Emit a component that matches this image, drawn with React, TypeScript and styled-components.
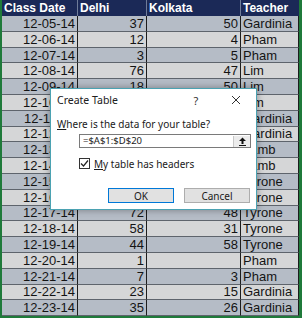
import styled, { createGlobalStyle } from "styled-components";

const GlobalStyle = createGlobalStyle`
	html, body {
		margin: 0;
		padding: 0;
		background: #ffffff;
	}
`;

type Row = { date: string; delhi: string; kolkata: string; teacher: string };

const rows: Row[] = [
	{ date: "12-05-14", delhi: "37", kolkata: "50", teacher: "Gardinia" },
	{ date: "12-06-14", delhi: "12", kolkata: "4", teacher: "Pham" },
	{ date: "12-07-14", delhi: "3", kolkata: "5", teacher: "Pham" },
	{ date: "12-08-14", delhi: "76", kolkata: "47", teacher: "Lim" },
	{ date: "12-09-14", delhi: "18", kolkata: "50", teacher: "Lim" },
	{ date: "12-10-14", delhi: "64", kolkata: "22", teacher: "Lim" },
	{ date: "12-11-14", delhi: "9", kolkata: "41", teacher: "Gardinia" },
	{ date: "12-12-14", delhi: "27", kolkata: "16", teacher: "Gardinia" },
	{ date: "12-13-14", delhi: "53", kolkata: "8", teacher: "Lamb" },
	{ date: "12-14-14", delhi: "40", kolkata: "29", teacher: "Lamb" },
	{ date: "12-15-14", delhi: "11", kolkata: "62", teacher: "Tyrone" },
	{ date: "12-16-14", delhi: "35", kolkata: "19", teacher: "Tyrone" },
	{ date: "12-17-14", delhi: "72", kolkata: "48", teacher: "Tyrone" },
	{ date: "12-18-14", delhi: "58", kolkata: "31", teacher: "Tyrone" },
	{ date: "12-19-14", delhi: "44", kolkata: "58", teacher: "Tyrone" },
	{ date: "12-20-14", delhi: "1", kolkata: "", teacher: "Pham" },
	{ date: "12-21-14", delhi: "7", kolkata: "3", teacher: "Pham" },
	{ date: "12-22-14", delhi: "23", kolkata: "15", teacher: "Gardinia" },
	{ date: "12-23-14", delhi: "35", kolkata: "26", teacher: "Gardinia" },
];

const headers = ["Class Date", "Delhi", "Kolkata", "Teacher"];

const Sheet = styled.div`
	position: relative;
	width: 302px;
	height: 318px;
	box-sizing: border-box;
	overflow: hidden;
	border-left: 2px solid #1f7a3a;
	border-right: 3px solid #1f7a3a;
	border-bottom: 2px solid #1f7a3a;
	background: #c9cdd2;
	font-family: "Liberation Sans", Arial, sans-serif;
`;

const Grid = styled.div`
	display: grid;
	grid-template-columns: 76px 69px 94px 58px;
	grid-template-rows: 16px repeat(19, 15.8px);
`;

const HeaderCell = styled.div`
	display: flex;
	align-items: center;
	padding-left: 2px;
	box-sizing: border-box;
	background: #1b2957;
	color: #ffffff;
	font-weight: 700;
	font-size: 12px;
	border-right: 1px solid #6f7c99;
	white-space: nowrap;
	overflow: hidden;

	&:nth-child(4) {
		border-right: none;
	}
`;

const Cell = styled.div<{ $align: "left" | "right"; $dark: boolean }>`
	display: flex;
	align-items: center;
	justify-content: ${(p) => (p.$align === "right" ? "flex-end" : "flex-start")};
	padding: 0 2px;
	box-sizing: border-box;
	background: ${(p) => (p.$dark ? "#b5bcc6" : "#d5d6d7")};
	color: #141414;
	font-size: 13px;
	border-right: 1px solid #1d1d1d;
	border-bottom: 1px solid #5e646c;
	white-space: nowrap;
	overflow: hidden;
`;

const Dialog = styled.div`
	position: absolute;
	left: 48px;
	top: 88px;
	width: 207px;
	height: 122px;
	box-sizing: border-box;
	display: flex;
	flex-direction: column;
	padding: 0 6px;
	background: #ffffff;
	border: 1px solid #4ba2b2;
	box-shadow: 0 0 7px rgba(0, 0, 0, 0.35);
	font-family: "Noto Sans", "Open Sans", sans-serif;
	font-size: 10px;
	color: #1a1a1a;
`;

const TitleBar = styled.div`
	display: flex;
	align-items: center;
	height: 22px;
`;

const Title = styled.span`
	flex: 1;
	font-size: 10.5px;
	color: #202020;
`;

const TitleButton = styled.span`
	display: flex;
	align-items: center;
	justify-content: center;
	width: 14px;
	height: 14px;
	font-size: 11px;
	color: #333333;
`;

const HelpButton = styled(TitleButton)`
	margin-right: 26px;
`;

const CloseButton = styled(TitleButton)`
	margin-right: 7px;
`;

const Label = styled.div`
	margin-top: 6px;
	line-height: 14px;
`;

const RefInput = styled.div`
	display: flex;
	align-items: center;
	margin: 3px 0 0 22px;
	width: 172px;
	height: 14px;
	box-sizing: border-box;
	border: 1px solid #7a7a7a;
	padding-left: 3px;
	font-size: 9.5px;
	line-height: 12px;
`;

const RefText = styled.span`
	flex: 1;
`;

const CollapseButton = styled.span`
	display: flex;
	align-items: center;
	justify-content: center;
	width: 16px;
	height: 11px;
	background: #ececec;
	border-left: 1px solid #c8c8c8;
`;

const CheckRow = styled.label`
	display: flex;
	align-items: center;
	gap: 4px;
	margin: 10px 0 0 22px;
	height: 11px;
`;

const Box = styled.span`
	display: flex;
	align-items: center;
	justify-content: center;
	width: 11px;
	height: 11px;
	box-sizing: border-box;
	border: 1px solid #333333;
	background: #ffffff;
`;

const Buttons = styled.div`
	display: flex;
	justify-content: flex-end;
	gap: 10px;
	margin-top: 19px;
`;

const Button = styled.button<{ $focused?: boolean }>`
	width: 66px;
	height: 15px;
	padding: 0;
	box-sizing: border-box;
	background: #e1e1e1;
	border: 1px solid ${(p) => (p.$focused ? "#0078d7" : "#adadad")};
	font-family: "Noto Sans", "Open Sans", sans-serif;
	font-size: 10px;
	line-height: 12px;
	color: #1a1a1a;
`;

export default function App() {
	return (
		<>
			<GlobalStyle />
			<Sheet>
				<Grid>
					{headers.map((h) => (
						<HeaderCell key={h}>{h}</HeaderCell>
					))}
					{rows.map((r, i) => {
						const dark = i % 2 === 0;
						return [
							<Cell key={`d${i}`} $align="right" $dark={dark}>
								{r.date}
							</Cell>,
							<Cell key={`a${i}`} $align="right" $dark={dark}>
								{r.delhi}
							</Cell>,
							<Cell key={`b${i}`} $align="right" $dark={dark}>
								{r.kolkata}
							</Cell>,
							<Cell key={`t${i}`} $align="left" $dark={dark}>
								{r.teacher}
							</Cell>,
						];
					})}
				</Grid>
				<Dialog>
					<TitleBar>
						<Title>Create Table</Title>
						<HelpButton>?</HelpButton>
						<CloseButton>
							<svg width="10" height="10" viewBox="0 0 10 10">
								<path d="M1 1 L9 9 M9 1 L1 9" stroke="#333" strokeWidth="1" fill="none" />
							</svg>
						</CloseButton>
					</TitleBar>
					<Label>
						<u>W</u>here is the data for your table?
					</Label>
					<RefInput>
						<RefText>=$A$1:$D$20</RefText>
						<CollapseButton>
							<svg width="9" height="9" viewBox="0 0 9 9">
								<path d="M4.5 0.5 L8 4 L5.5 4 L5.5 7 L3.5 7 L3.5 4 L1 4 Z" fill="#111" />
								<path d="M1 8.5 L8 8.5" stroke="#111" strokeWidth="1" />
							</svg>
						</CollapseButton>
					</RefInput>
					<CheckRow>
						<Box>
							<svg width="9" height="9" viewBox="0 0 9 9">
								<path d="M1 4.5 L3.5 7 L8 1.5" stroke="#222" strokeWidth="1.2" fill="none" />
							</svg>
						</Box>
						<span>
							<u>M</u>y table has headers
						</span>
					</CheckRow>
					<Buttons>
						<Button $focused>OK</Button>
						<Button>Cancel</Button>
					</Buttons>
				</Dialog>
			</Sheet>
		</>
	);
}
